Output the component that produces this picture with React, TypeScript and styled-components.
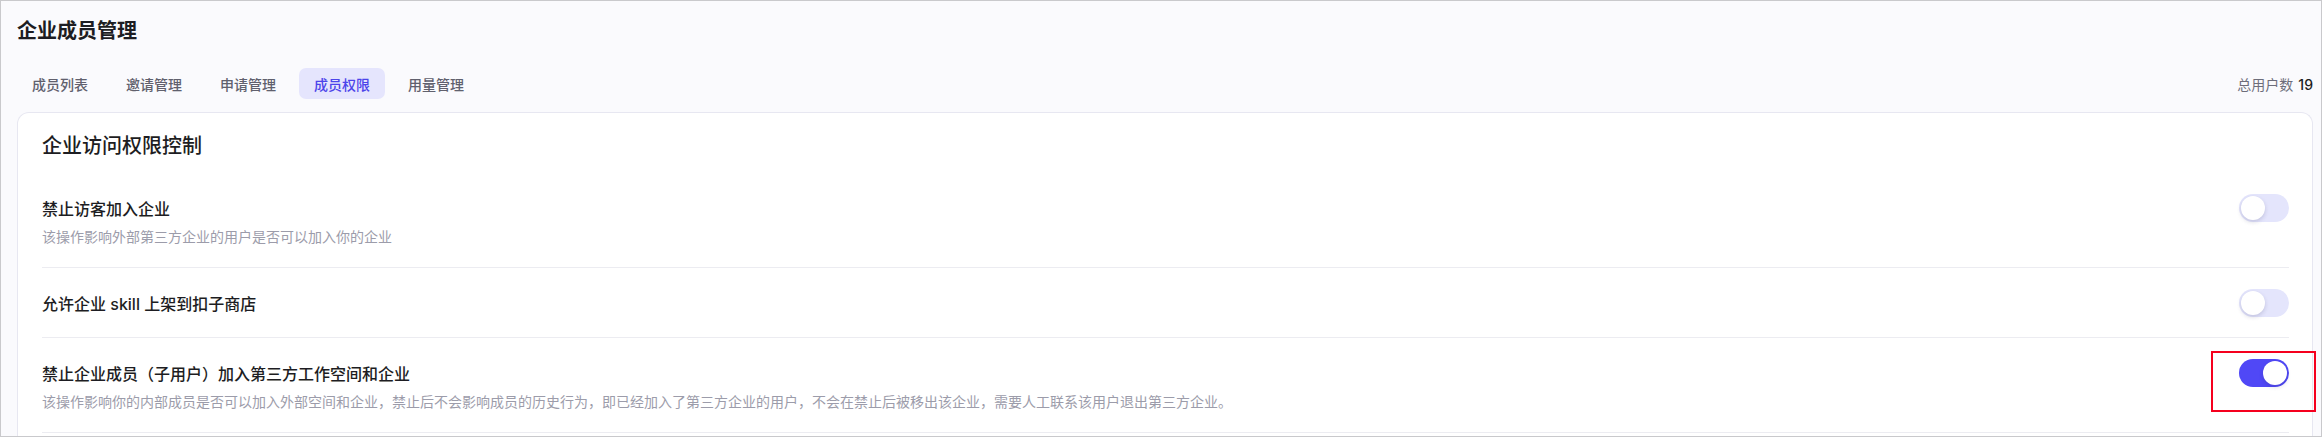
import React from "react";
import styled, { createGlobalStyle } from "styled-components";

const GlobalStyle = createGlobalStyle`
  * { box-sizing: border-box; }
  html, body { margin: 0; padding: 0; }
  body {
    font-family: "Inter", "Noto Sans CJK SC", "Noto Sans", sans-serif;
    -webkit-font-smoothing: antialiased;
  }
`;

const Frame = styled.div`
  width: 2322px;
  height: 437px;
  border: 1px solid #c9c9cc;
  background: #fafafd;
  padding: 17px 8px 0 16px;
  display: flex;
  flex-direction: column;
  overflow: hidden;
`;

const PageTitle = styled.h1`
  margin: 0;
  font-size: 20px;
  line-height: 26px;
  font-weight: 600;
  color: #1d1d22;
`;

const TabBar = styled.div`
  margin-top: 24px;
  display: flex;
  align-items: center;
  justify-content: space-between;
  height: 31px;
`;

const Tabs = styled.div`
  display: flex;
  gap: 8px;
`;

const Tab = styled.div<{ $active?: boolean }>`
  height: 31px;
  padding: 0 15px;
  border-radius: 7px;
  display: flex;
  align-items: center;
  font-size: 14px;
  font-weight: 500;
  color: ${(p) => (p.$active ? "#4c44ea" : "#60606d")};
  background: ${(p) => (p.$active ? "#e5e5fd" : "transparent")};
`;

const Total = styled.div`
  font-size: 14px;
  color: #6d6d7a;
  display: flex;
  gap: 5px;
  align-items: baseline;
`;

const TotalNum = styled.span`
  color: #1d1d22;
  font-weight: 500;
`;

const Card = styled.section`
  margin-top: 13px;
  flex: 1;
  background: #ffffff;
  border: 1px solid #e7e7f1;
  border-bottom: none;
  border-radius: 12px 12px 0 0;
  padding: 21px 23px 0 24px;
`;

const CardTitle = styled.h2`
  margin: 0 0 15px;
  font-size: 20px;
  line-height: 24px;
  font-weight: 500;
  color: #1d1d22;
`;

const Row = styled.div`
  padding: 21px 0 20px;
  border-bottom: 1px solid #ececf1;
`;

const RowHead = styled.div`
  height: 28px;
  display: flex;
  align-items: center;
  justify-content: space-between;
`;

const RowTitle = styled.div`
  font-size: 16px;
  font-weight: 500;
  color: #1d1d22;
`;

const RowDesc = styled.div`
  margin-top: 5px;
  font-size: 14px;
  line-height: 20px;
  color: #9c9caa;
`;

const SwitchWrap = styled.div`
  position: relative;
  width: 50px;
  height: 28px;
`;

const Track = styled.div<{ $on?: boolean }>`
  width: 50px;
  height: 28px;
  border-radius: 14px;
  background: ${(p) => (p.$on ? "#5048f6" : "#e4e5fc")};
  display: flex;
  align-items: center;
  justify-content: ${(p) => (p.$on ? "flex-end" : "flex-start")};
  padding: 0 2px;
`;

const Knob = styled.div`
  width: 24px;
  height: 24px;
  border-radius: 50%;
  background: #ffffff;
  box-shadow: 0 2px 4px rgba(40, 40, 90, 0.18);
`;

const Highlight = styled.div`
  position: absolute;
  left: -28px;
  top: -8px;
  width: 105px;
  height: 61px;
  border: 2px solid #f5001e;
  pointer-events: none;
`;

function Switch({ on, marked }: { on?: boolean; marked?: boolean }) {
  return (
    <SwitchWrap>
      <Track $on={on}>
        <Knob />
      </Track>
      {marked && <Highlight />}
    </SwitchWrap>
  );
}

const tabs = ["成员列表", "邀请管理", "申请管理", "成员权限", "用量管理"];

const settings = [
  {
    title: "禁止访客加入企业",
    desc: "该操作影响外部第三方企业的用户是否可以加入你的企业",
    on: false,
  },
  { title: "允许企业 skill 上架到扣子商店", desc: "", on: false },
  {
    title: "禁止企业成员（子用户）加入第三方工作空间和企业",
    desc: "该操作影响你的内部成员是否可以加入外部空间和企业，禁止后不会影响成员的历史行为，即已经加入了第三方企业的用户，不会在禁止后被移出该企业，需要人工联系该用户退出第三方企业。",
    on: true,
    marked: true,
  },
];

export default function App() {
  return (
    <>
      <GlobalStyle />
      <Frame>
        <PageTitle>企业成员管理</PageTitle>
        <TabBar>
          <Tabs>
            {tabs.map((t) => (
              <Tab key={t} $active={t === "成员权限"}>
                {t}
              </Tab>
            ))}
          </Tabs>
          <Total>
            总用户数<TotalNum>19</TotalNum>
          </Total>
        </TabBar>
        <Card>
          <CardTitle>企业访问权限控制</CardTitle>
          {settings.map((s) => (
            <Row key={s.title}>
              <RowHead>
                <RowTitle>{s.title}</RowTitle>
                <Switch on={s.on} marked={s.marked} />
              </RowHead>
              {s.desc && <RowDesc>{s.desc}</RowDesc>}
            </Row>
          ))}
        </Card>
      </Frame>
    </>
  );
}
